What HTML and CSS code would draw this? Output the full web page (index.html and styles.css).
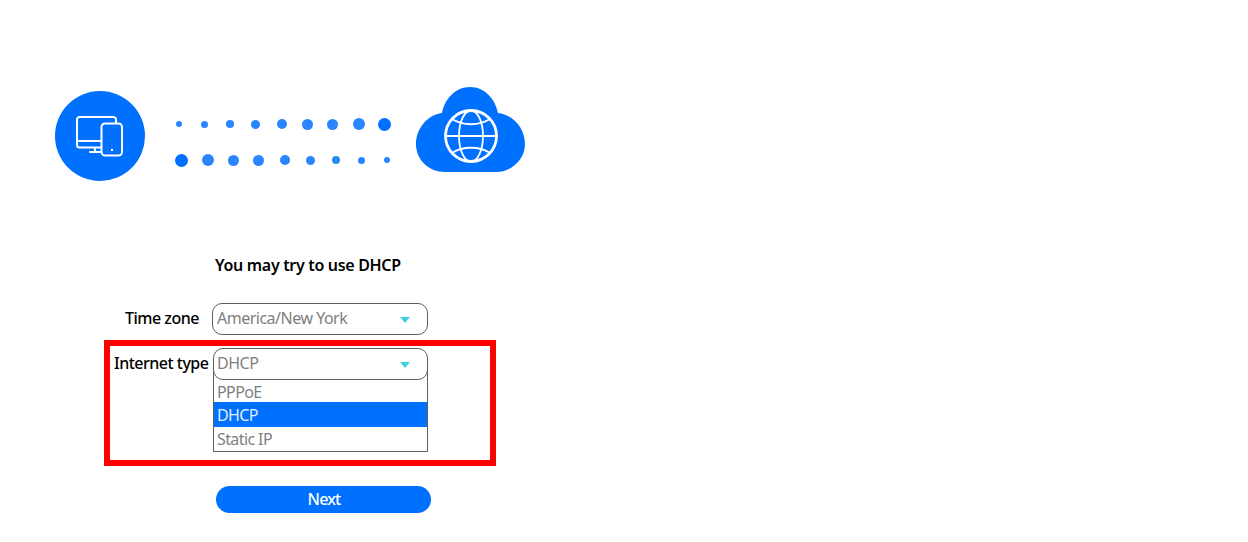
FILE: index.html
```html
<!DOCTYPE html>
<html lang="en">
<head>
<meta charset="utf-8">
<title>Internet setup</title>
<link rel="stylesheet" href="styles.css">
</head>
<body>
<main class="page">
  <section class="hero">
    <div class="device-badge">
      <svg class="device-icon" viewBox="0 0 48 41" fill="none" stroke="#fff" stroke-width="2" stroke-linejoin="round" stroke-linecap="round">
        <path d="M25 31.500H3.500A2.500 2.500 0 0 1 1 29V3.500A2.500 2.500 0 0 1 3.500 1H37.500A2.500 2.500 0 0 1 40 3.500V7.500"/>
        <path d="M1 25H25"/>
        <path d="M14 36H25M19 32V36"/>
        <rect x="25.500" y="7.500" width="20.500" height="32" rx="3.500"/>
        <rect x="35" y="33" width="2" height="2" fill="#fff" stroke="none"/>
      </svg>
    </div>
    <div class="dots">
      <div class="dot-row">
        <span class="dot s5"></span><span class="dot s6"></span><span class="dot s7"></span><span class="dot s8"></span><span class="dot s9"></span><span class="dot s10"></span><span class="dot s11"></span><span class="dot s12"></span><span class="dot s13"></span>
      </div>
      <div class="dot-row dot-row-low">
        <span class="dot s13"></span><span class="dot s12"></span><span class="dot s11"></span><span class="dot s10"></span><span class="dot s9"></span><span class="dot s8"></span><span class="dot s7"></span><span class="dot s6"></span><span class="dot s5"></span>
      </div>
    </div>
    <svg class="cloud" viewBox="0 0 109 85">
      <path fill="#0070ff" d="M26 26C11 28 0 42 0 57C0 73 13 85 29 85H80C96 85 109 72 109 57C109 42 98 28 82 26C79 11 68 0 54 0C40 0 29 11 26 26Z"/>
      <g fill="none" stroke="#fff">
        <circle cx="55" cy="49" r="25.500" stroke-width="2.800"/>
        <ellipse cx="55" cy="49" rx="12" ry="25.500" stroke-width="1.800"/>
        <path stroke-width="1.800" d="M30 49H80M36 32C47 39 63 39 74 32M36 66C47 59 63 59 74 66"/>
      </g>
    </svg>
  </section>

  <h1 class="title">You may try to use DHCP</h1>

  <form class="form">
    <div class="row row-zone">
      <label class="label label-zone">Time zone</label>
      <div class="select select-zone">
        <span>America/New York</span><i class="caret"></i>
      </div>
    </div>
    <div class="row row-type">
      <label class="label label-type">Internet type</label>
      <div class="combo">
        <div class="select select-type">
          <span>DHCP</span><i class="caret"></i>
        </div>
        <ul class="options">
          <li class="option">PPPoE</li>
          <li class="option option-active">DHCP</li>
          <li class="option">Static IP</li>
        </ul>
      </div>
    </div>
    <button class="next" type="button">Next</button>
  </form>
  <div class="highlight"></div>
</main>
</body>
</html>
```
FILE: styles.css
```css
* { box-sizing: border-box; }
html, body { margin: 0; padding: 0; background: #fff; }
body {
  font-family: "Noto Sans", "Open Sans", sans-serif;
  width: 1248px;
  height: 542px;
  overflow: hidden;
}
.page { position: relative; width: 100%; height: 100%; padding: 87px 0 0 55px; }

.hero { display: flex; align-items: flex-start; height: 94px; }
.device-badge {
  width: 90px;
  height: 90px;
  margin-top: 3.500px;
  border-radius: 50%;
  background: #0070ff;
  display: flex;
  align-items: center;
  justify-content: center;
  flex: none;
}
.device-icon { width: 48px; height: 41px; margin: 1px 0 0 0; }

.dots { width: 271px; flex: none; padding-top: 30.500px; }
.dot-row { display: grid; grid-template-columns: repeat(9, 25.700px); align-items: center; justify-items: center; height: 13px; margin-left: 21px; }
.dot-row-low { margin-top: 23px; margin-left: 24px; }
.dot { border-radius: 50%; width: var(--d); height: var(--d); background: #2a86ff; }
.s5 { --d: 6px; }
.s6 { --d: 7px; }
.s7 { --d: 8px; }
.s8 { --d: 9px; }
.s9 { --d: 10px; }
.s10 { --d: 11px; }
.s11 { --d: 11px; }
.s12 { --d: 12px; }
.s13 { --d: 13px; background: #0070ff; }

.cloud { width: 109px; height: 85px; flex: none; }

.title {
  margin: 73px 0 0 160px;
  font-size: 16px;
  line-height: 22px;
  font-weight: 600;
  letter-spacing: -0.320px;
  color: #000;
  white-space: nowrap;
}

.form { margin-top: 27px; display: flex; flex-direction: column; }
.row { display: flex; align-items: flex-start; }
.row-zone { height: 45px; }
.row-type { height: 138px; }
.label { font-size: 16px; line-height: 30px; color: #000; letter-spacing: -0.500px; font-weight: 500; white-space: nowrap; }
.label-zone { margin: 0 13px 0 70px; width: 74px; }
.label-type { margin: 0 5px 0 59px; width: 94px; }

.select {
  position: relative;
  z-index: 1;
  width: 215px;
  height: 32px;
  border: 1px solid #5f5f5f;
  border-radius: 10px;
  background: #fff;
  display: flex;
  align-items: center;
  justify-content: space-between;
  padding: 0 17px 2px 4px;
  font-size: 16px;
  letter-spacing: -0.500px;
  color: #808080;
}
.select-zone { width: 216px; }
.select-type { padding-left: 3px; }
.caret {
  width: 0;
  height: 0;
  margin-top: 3px;
  border-left: 5.500px solid transparent;
  border-right: 5.500px solid transparent;
  border-top: 6px solid #3fd0e0;
}
.combo { position: relative; width: 215px; }
.options {
  position: absolute;
  top: 22px;
  left: 0;
  width: 100%;
  margin: 0;
  padding: 10px 0 0;
  list-style: none;
  border: 1px solid #5f5f5f;
  border-top: 0;
  background: #fff;
}
.option { height: 24px; line-height: 24px; padding-left: 3px; font-size: 16px; letter-spacing: -0.600px; color: #808080; }
.option:first-child { height: 22px; line-height: 25px; }
.option-active { height: 25px; line-height: 27px; background: #0070ff; color: #e4efff; }

.next {
  width: 215px;
  height: 27px;
  margin-left: 161px;
  border: 0;
  border-radius: 14px;
  background: #0070ff;
  color: #fff;
  font: 500 16px/27px "Noto Sans", "Open Sans", sans-serif;
  letter-spacing: -0.800px;
  padding: 0 0 0 1px;
}

.highlight {
  position: absolute;
  left: 104px;
  top: 340px;
  width: 392px;
  height: 126px;
  border: 6px solid #ff0000;
  pointer-events: none;
}
```
